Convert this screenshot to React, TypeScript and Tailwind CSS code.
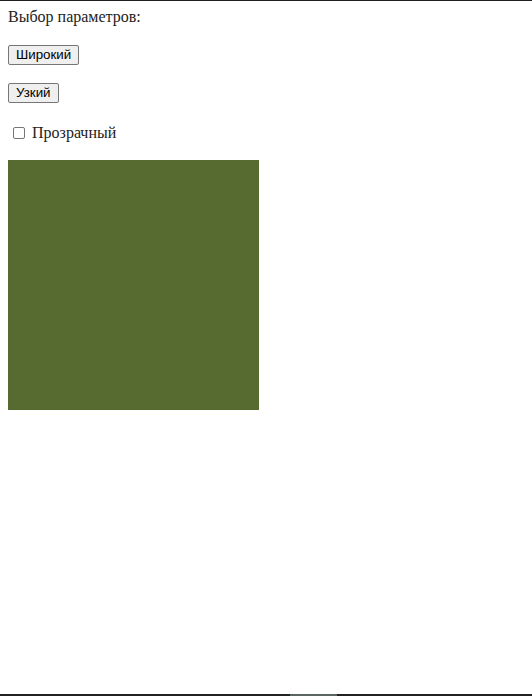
import React from "react";

export default function App() {
  return (
    <div className="flex h-[696px] w-[532px] flex-col overflow-hidden bg-white border-t border-[#1f1f1f] text-[#222]">
      <div className="flex flex-col px-2 pt-[7px]" style={{ fontFamily: '"Liberation Serif", "Times New Roman", serif' }}>
        <div className="h-[18px] text-[16px] leading-[18px]">Выбор параметров:</div>
        <div className="mt-[19px] flex">
          <button className="h-[20px] rounded-[2px] border border-[#767676] bg-[#efefef] px-[7px] text-[13.33px] leading-[16px] text-black" style={{ fontFamily: '"Liberation Sans", Arial, sans-serif' }}>
            Широкий
          </button>
        </div>
        <div className="mt-[18px] flex">
          <button className="h-[20px] rounded-[2px] border border-[#767676] bg-[#efefef] px-[7px] text-[13.33px] leading-[16px] text-black" style={{ fontFamily: '"Liberation Sans", Arial, sans-serif' }}>
            Узкий
          </button>
        </div>
        <label className="mt-[21px] flex h-[18px] items-center">
          <span className="ml-[5px] mr-[7px] h-[12px] w-[12px] rounded-[2px] border border-[#767676] bg-white" />
          <span className="text-[16px] leading-[18px]">Прозрачный</span>
        </label>
        <div className="mt-[18px] h-[250px] w-[251px] bg-[#576b31]" />
      </div>
      <div className="mt-auto flex h-[2px] bg-[#222]">
        <div className="ml-[290px] w-[47px] bg-[#5a6560]" />
      </div>
    </div>
  );
}
